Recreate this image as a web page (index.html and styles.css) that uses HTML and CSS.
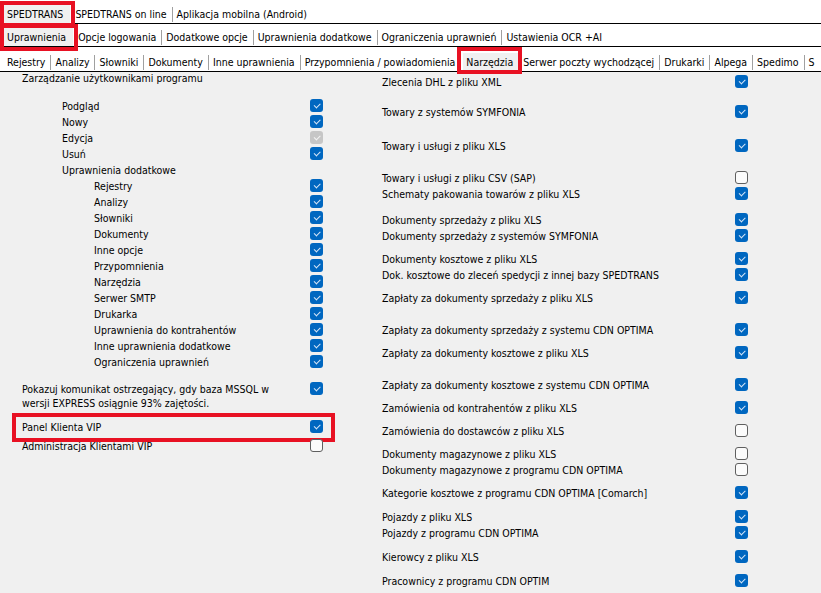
FILE: index.html
```html
<!DOCTYPE html>
<html lang="pl">
<head>
<meta charset="utf-8">
<title>Uprawnienia</title>
<link rel="stylesheet" href="styles.css">
</head>
<body>
<div class="tabbar">
  <div class="tabrow r1">
    <span class="tab sel hl1">SPEDTRANS</span>
    <span class="tab">SPEDTRANS on line</span>
    <span class="tab s">Aplikacja mobilna (Android)</span>
  </div>
  <div class="tabrow r2">
    <span class="tab sel hl2">Uprawnienia</span>
    <span class="tab">Opcje logowania</span>
    <span class="tab s">Dodatkowe opcje</span>
    <span class="tab s">Uprawnienia dodatkowe</span>
    <span class="tab s">Ograniczenia uprawnień</span>
    <span class="tab s">Ustawienia OCR +AI</span>
  </div>
  <div class="tabrow r3">
    <span class="tab first">Rejestry</span>
    <span class="tab s">Analizy</span>
    <span class="tab s">Słowniki</span>
    <span class="tab s">Dokumenty</span>
    <span class="tab s">Inne uprawnienia</span>
    <span class="tab s">Przypomnienia / powiadomienia</span>
    <span class="tab sel sel3 hl3">Narzędzia</span>
    <span class="tab">Serwer poczty wychodzącej</span>
    <span class="tab s">Drukarki</span>
    <span class="tab s">Alpega</span>
    <span class="tab s">Spedimo</span>
    <span class="tab s">S</span>
  </div>
</div>

<div class="content">
  <div class="col left">
    <div class="title">Zarządzanie użytkownikami programu</div>
    <div class="row ind1 m14"><span>Podgląd</span><span class="cb on"></span></div>
    <div class="row ind1"><span>Nowy</span><span class="cb on"></span></div>
    <div class="row ind1"><span>Edycja</span><span class="cb dis"></span></div>
    <div class="row ind1"><span>Usuń</span><span class="cb on"></span></div>
    <div class="row ind1"><span>Uprawnienia dodatkowe</span></div>
    <div class="row ind2"><span>Rejestry</span><span class="cb on"></span></div>
    <div class="row ind2"><span>Analizy</span><span class="cb on"></span></div>
    <div class="row ind2"><span>Słowniki</span><span class="cb on"></span></div>
    <div class="row ind2"><span>Dokumenty</span><span class="cb on"></span></div>
    <div class="row ind2"><span>Inne opcje</span><span class="cb on"></span></div>
    <div class="row ind2"><span>Przypomnienia</span><span class="cb on"></span></div>
    <div class="row ind2"><span>Narzędzia</span><span class="cb on"></span></div>
    <div class="row ind2"><span>Serwer SMTP</span><span class="cb on"></span></div>
    <div class="row ind2"><span>Drukarka</span><span class="cb on"></span></div>
    <div class="row ind2"><span>Uprawnienia do kontrahentów</span><span class="cb on"></span></div>
    <div class="row ind2"><span>Inne uprawnienia dodatkowe</span><span class="cb on"></span></div>
    <div class="row ind2"><span>Ograniczenia uprawnień</span><span class="cb on"></span></div>
    <div class="row multi m12"><span>Pokazuj komunikat ostrzegający, gdy baza MSSQL w<br>wersji EXPRESS osiągnie 93% zajętości.</span><span class="cb on"></span></div>
    <div class="row hl m9"><span>Panel Klienta VIP</span><span class="cb on"></span></div>
    <div class="row m3"><span>Administracja Klientami VIP</span><span class="cb off"></span></div>
  </div>

  <div class="col right">
    <div class="row m2"><span>Zlecenia DHL z pliku XML</span><span class="cb on"></span></div>
    <div class="row m14"><span>Towary z systemów SYMFONIA</span><span class="cb on"></span></div>
    <div class="row m18"><span>Towary i usługi z pliku XLS</span><span class="cb on"></span></div>
    <div class="row m16"><span>Towary i usługi z pliku CSV (SAP)</span><span class="cb off"></span></div>
    <div class="row"><span>Schematy pakowania towarów z pliku XLS</span><span class="cb on"></span></div>
    <div class="row m10"><span>Dokumenty sprzedaży z pliku XLS</span><span class="cb on"></span></div>
    <div class="row"><span>Dokumenty sprzedaży z systemów SYMFONIA</span><span class="cb on"></span></div>
    <div class="row m7"><span>Dokumenty kosztowe z pliku XLS</span><span class="cb on"></span></div>
    <div class="row"><span>Dok. kosztowe do zleceń spedycji z innej bazy SPEDTRANS</span><span class="cb on"></span></div>
    <div class="row m7"><span>Zapłaty za dokumenty sprzedaży z pliku XLS</span><span class="cb on"></span></div>
    <div class="row m16"><span>Zapłaty za dokumenty sprzedaży z systemu CDN OPTIMA</span><span class="cb on"></span></div>
    <div class="row m7"><span>Zapłaty za dokumenty kosztowe z pliku XLS</span><span class="cb on"></span></div>
    <div class="row m16"><span>Zapłaty za dokumenty kosztowe z systemu CDN OPTIMA</span><span class="cb on"></span></div>
    <div class="row m7"><span>Zamówienia od kontrahentów z pliku XLS</span><span class="cb on"></span></div>
    <div class="row m7"><span>Zamówienia do dostawców z pliku XLS</span><span class="cb off"></span></div>
    <div class="row m7"><span>Dokumenty magazynowe z pliku XLS</span><span class="cb off"></span></div>
    <div class="row"><span>Dokumenty magazynowe z programu CDN OPTIMA</span><span class="cb off"></span></div>
    <div class="row m7"><span>Kategorie kosztowe z programu CDN OPTIMA [Comarch]</span><span class="cb on"></span></div>
    <div class="row m8"><span>Pojazdy z pliku XLS</span><span class="cb on"></span></div>
    <div class="row"><span>Pojazdy z programu CDN OPTIMA</span><span class="cb on"></span></div>
    <div class="row m8"><span>Kierowcy z pliku XLS</span><span class="cb on"></span></div>
    <div class="row m8"><span>Pracownicy z programu CDN OPTIM</span><span class="cb on"></span></div>
  </div>
</div>
</body>
</html>
```

FILE: styles.css
```css
html, body {
  margin: 0;
  padding: 0;
}
body {
  width: 821px;
  height: 593px;
  overflow: hidden;
  background: #f0f0f0;
  color: #000;
  font-family: "DejaVu Sans Condensed", "Liberation Sans", Arial, sans-serif;
  font-size: 10.5px;
}

/* ---------- tab strips ---------- */
.tabbar {
  background: #fff;
}
.tabrow {
  display: flex;
  align-items: flex-end;
  border-bottom: 1px solid #000;
  padding-left: 4px;
}
.r1 { height: 23px; }
.r2 { height: 22px; }
.r3 { height: 24px; }

.tab {
  flex-shrink: 0;
  position: relative;
  height: 18px;
  line-height: 19px;
  padding: 0 5px;
  white-space: nowrap;
}
.tab.first {
  padding-left: 3px;
}
.tab.s {
  padding-left: 5px;
  background: linear-gradient(#a0a0a0, #a0a0a0) 0 2px / 1px 15px no-repeat;
}
.tab.sel {
  background: #f0f0f0;
  padding: 0 7px 0 3px;
}
.tab.sel3 {
  margin-left: 3px;
  padding: 0 5px 0 3px;
}
.tab.sel::before {
  content: "";
  position: absolute;
  border: 4px solid #e81123;
}
.hl1::before { left: -4px; right: -5px; top: -4px; bottom: -4px; }
.hl2::before { left: -4px; right: -5px; top: -4px; bottom: -5px; }
.hl3::before { left: -6px; right: -4px; top: -6px; bottom: -3px; }

/* ---------- content ---------- */
.content {
  display: flex;
  align-items: flex-start;
}
.left {
  width: 301px;
  margin-left: 22px;
}
.right {
  width: 366px;
  margin-left: 59px;
}
.title {
  height: 12px;
  line-height: 13px;
  white-space: nowrap;
}
.row {
  position: relative;
  display: flex;
  justify-content: space-between;
  align-items: center;
  height: 16px;
  line-height: 17px;
  white-space: nowrap;
}
.row .cb { margin-top: -1px; }
.ind1 { padding-left: 40px; }
.ind2 { padding-left: 72px; }

.row.multi {
  height: auto;
  align-items: flex-start;
  line-height: 14px;
  padding-top: 1px;
}
.row.multi .cb { margin-top: 0; }

.row.hl::before {
  content: "";
  position: absolute;
  left: -10px;
  right: -12px;
  top: -6px;
  bottom: -7px;
  border: 4px solid #e81123;
}

.m2 { margin-top: 2px; }
.m3 { margin-top: 3px; }
.m7 { margin-top: 7px; }
.m8 { margin-top: 8px; }
.m9 { margin-top: 9px; }
.m10 { margin-top: 10px; }
.m12 { margin-top: 11px; }
.m14 { margin-top: 14px; }
.m16 { margin-top: 16px; }
.m18 { margin-top: 18px; }

/* ---------- checkboxes ---------- */
.cb {
  position: relative;
  flex-shrink: 0;
  box-sizing: border-box;
  width: 13px;
  height: 13px;
  border-radius: 3px;
}
.cb.on { background: #0067c0; }
.cb.dis { background: #c6c6c6; }
.cb.off {
  background: #fbfbfb;
  border: 1px solid #5f5f5f;
}
.cb.on::after,
.cb.dis::after {
  content: "";
  position: absolute;
  left: 3.5px;
  top: 3.5px;
  width: 5px;
  height: 2.5px;
  border-left: 1px solid #d6e6f7;
  border-bottom: 1px solid #d6e6f7;
  transform: rotate(-45deg);
}
.cb.dis::after {
  border-color: #f4f4f4;
}
```
